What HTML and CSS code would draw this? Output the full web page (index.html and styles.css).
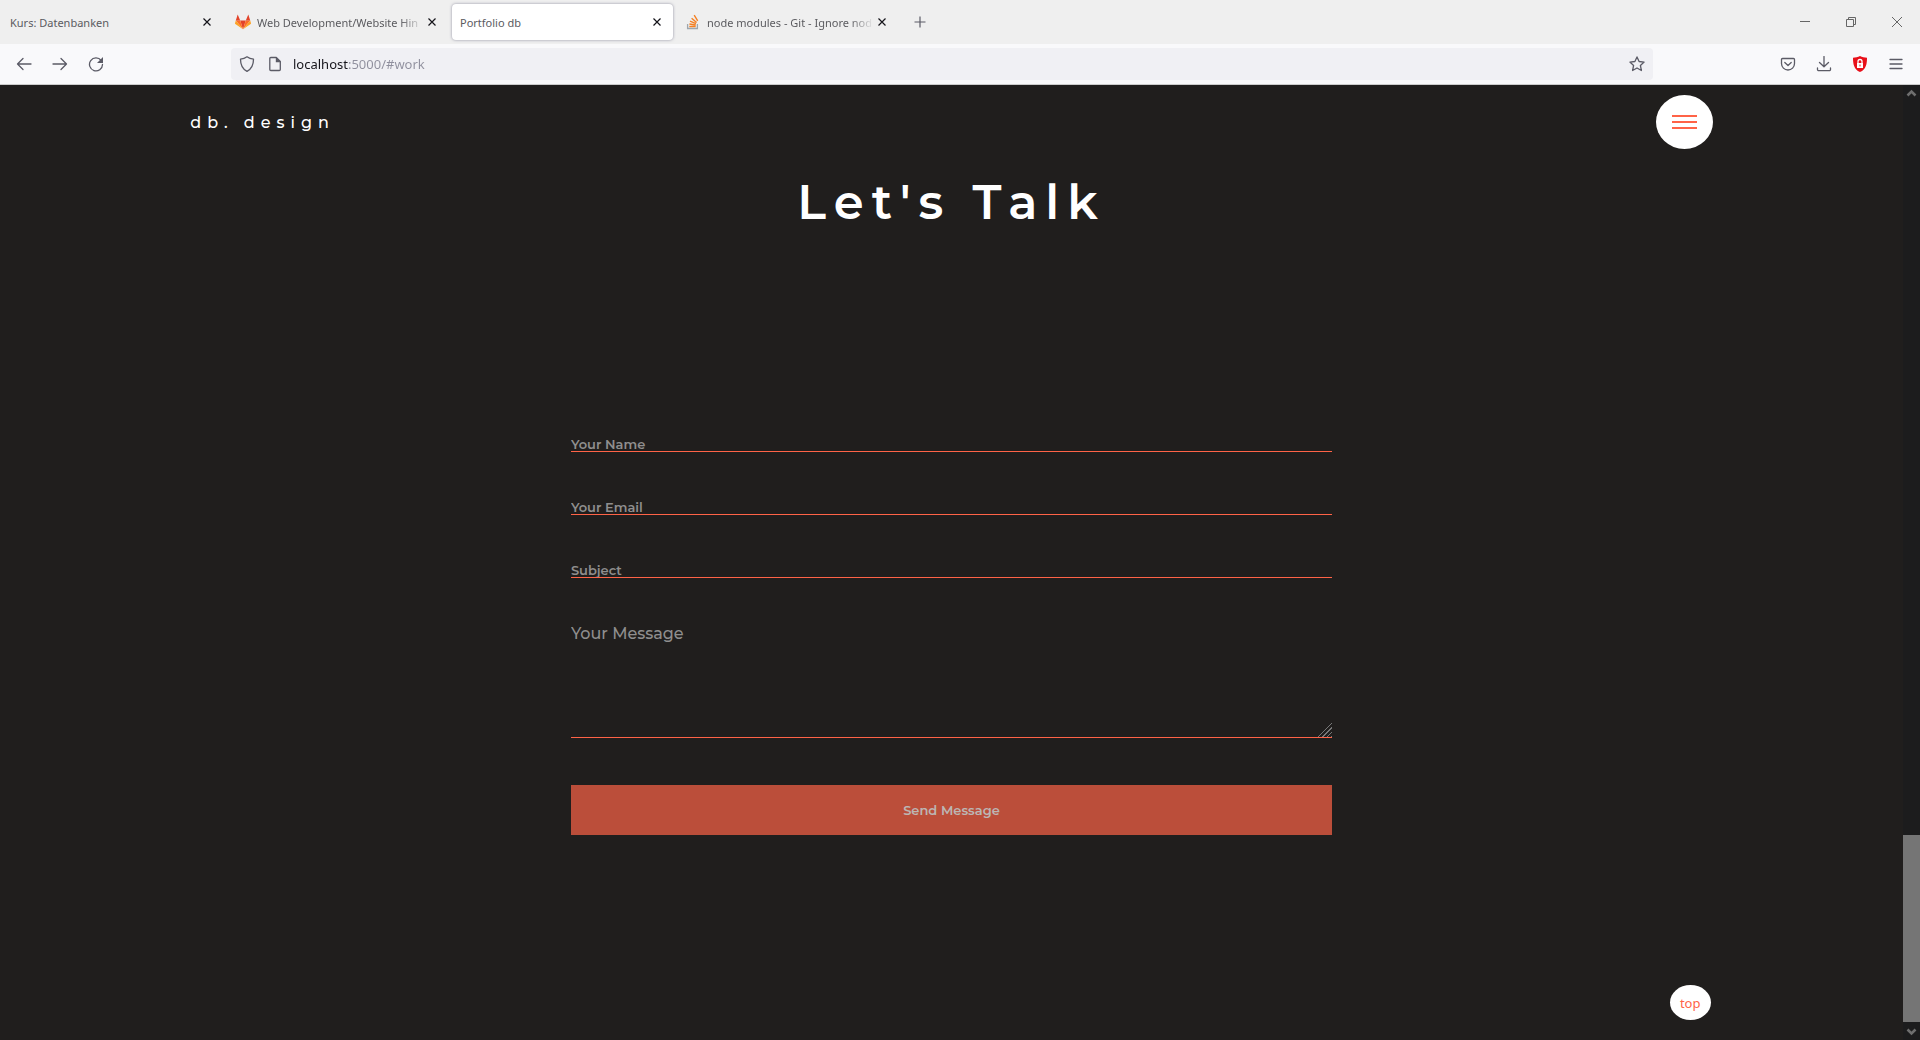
FILE: index.html
```html
<!DOCTYPE html>
<html lang="en">
<head>
<meta charset="utf-8">
<meta name="viewport" content="width=device-width, initial-scale=1">
<title>Portfolio db</title>
<link rel="stylesheet" href="styles.css">
</head>
<body>
<div class="browser">
  <header class="chrome">
    <div class="tabstrip">
      <div class="tab">
        <span class="tab-title">Kurs: Datenbanken</span>
        <button class="tab-close" aria-label="Close tab"><svg width="16" height="16" viewBox="0 0 16 16"><path d="M4.500 4.500l7 7M11.500 4.500l-7 7"/></svg></button>
      </div>
      <div class="tab">
        <svg class="favicon" width="16" height="16" viewBox="0 0 16 16"><path fill="#e24329" d="M8 15.200L5.200 6.500h5.600z"/><path fill="#fc6d26" d="M8 15.200L.8 6.500h4.400zM8 15.200l7.200-8.700h-4.400z"/><path fill="#fca326" d="M.8 6.500L0 9.300c0 .3 0 .6.300.8L8 15.200zM15.200 6.500l.8 2.800c0 .3 0 .6-.3.800L8 15.200z"/><path fill="#e24329" d="M.8 6.500L2.700.6l2.500 5.900zM15.200 6.500L13.300.6l-2.500 5.900z"/></svg>
        <span class="tab-title fade">Web Development/Website Hin</span>
        <button class="tab-close" aria-label="Close tab"><svg width="16" height="16" viewBox="0 0 16 16"><path d="M4.500 4.500l7 7M11.500 4.500l-7 7"/></svg></button>
      </div>
      <div class="tab active">
        <span class="tab-title">Portfolio db</span>
        <button class="tab-close" aria-label="Close tab"><svg width="16" height="16" viewBox="0 0 16 16"><path d="M4.500 4.500l7 7M11.500 4.500l-7 7"/></svg></button>
      </div>
      <div class="tab">
        <svg class="favicon" width="16" height="16" viewBox="0 0 16 16" fill="none"><path stroke="#9fa6ad" stroke-width="1.300" d="M2.600 10v4.500h9.800V10"/><path stroke="#f48024" stroke-width="1.400" d="M4.300 12.500h6.400M4.400 10l6.300 1M5 7.200l6 2.500M6.600 4.200l5 4.300M9.200 1.200l3.500 5.600"/></svg>
        <span class="tab-title fade">node modules - Git - Ignore nod</span>
        <button class="tab-close" aria-label="Close tab"><svg width="16" height="16" viewBox="0 0 16 16"><path d="M4.500 4.500l7 7M11.500 4.500l-7 7"/></svg></button>
      </div>
      <button class="new-tab" aria-label="New tab"><svg width="16" height="16" viewBox="0 0 16 16"><path d="M8 2.500v11M2.500 8h11"/></svg></button>
      <div class="window-controls">
        <button aria-label="Minimize"><svg width="10" height="10" viewBox="0 0 10 10"><path d="M0 4.500h10"/></svg></button>
        <button aria-label="Restore"><svg width="10" height="10" viewBox="0 0 10 10"><path d="M.5 2.500h7v7h-7zM2.500 2.500v-2h7v7h-2"/></svg></button>
        <button aria-label="Close window"><svg width="10" height="10" viewBox="0 0 10 10"><path d="M0 0l10 10M10 0L0 10"/></svg></button>
      </div>
    </div>
    <div class="toolbar">
      <div class="tools">
        <button aria-label="Back"><svg width="16" height="16" viewBox="0 0 16 16"><path d="M15 8H1.500M7 2.500L1.500 8 7 13.500"/></svg></button>
        <button aria-label="Forward"><svg width="16" height="16" viewBox="0 0 16 16"><path d="M1 8h13.500M9 2.500L14.500 8 9 13.500"/></svg></button>
        <button aria-label="Reload"><svg width="16" height="16" viewBox="0 0 16 16"><path d="M13.200 4.500A6.500 6.500 0 1 0 14.500 8.500"/><path class="solid" d="M15 1v6H9z"/></svg></button>
      </div>
      <div class="urlbar">
        <svg width="16" height="16" viewBox="0 0 16 16"><path d="M8 .8c2 1.500 4.300 2.200 6.500 2.400C14.500 8.500 12.500 13 8 15.300 3.500 13 1.500 8.500 1.500 3.200 3.700 3 6 2.300 8 .8z"/></svg>
        <svg width="16" height="16" viewBox="0 0 16 16"><path d="M3.800 1.500h5.500l4 4v8a1 1 0 0 1-1 1H3.800a1 1 0 0 1-1-1v-11a1 1 0 0 1 1-1z"/><path class="solid" d="M8.800 1v5.200H14z"/></svg>
        <input class="url" type="text" aria-label="Address" value="localhost:5000/#work">
        <button class="star" aria-label="Bookmark"><svg width="16" height="16" viewBox="0 0 16 16"><path d="M8 .9l2.100 4.600 5 .6-3.700 3.400 1 5L8 12l-4.400 2.500 1-5L.9 6.100l5-.6z"/></svg></button>
      </div>
      <div class="tools">
        <button aria-label="Pocket"><svg width="16" height="16" viewBox="0 0 16 16"><path d="M2.500 2.500h11a1 1 0 0 1 1 1V7.500a6.500 6.500 0 0 1-13 0v-4a1 1 0 0 1 1-1zM4.800 6.500L8 9.500l3.200-3"/></svg></button>
        <button aria-label="Downloads"><svg width="16" height="16" viewBox="0 0 16 16"><path d="M8 .5v10M3.500 6.500L8 10.800l4.500-4.300M1.500 12v1.500a1.200 1.200 0 0 0 1.200 1.200h10.600a1.200 1.200 0 0 0 1.200-1.200V12"/></svg></button>
        <button aria-label="Extension"><svg width="16" height="16" viewBox="0 0 16 16"><path class="shield" d="M8 0c2 1.200 4.700 1.700 7 1.700 0 6-.8 11.500-7 14.300C1.800 13.200 1 7.700 1 1.700 3.300 1.700 6 1.200 8 0z"/><path class="lock" d="M5 7h6v5H5z"/><path class="shackle" d="M6 7.200V5.500a2 2 0 0 1 4 0v1.700"/><path class="keyhole" d="M8 9v1"/></svg></button>
        <button aria-label="Menu"><svg width="16" height="16" viewBox="0 0 16 16"><path d="M2 3.500h12M2 8h12M2 12.500h12"/></svg></button>
      </div>
    </div>
  </header>
  <div class="viewport">
    <div class="page">
      <nav class="site-nav">
        <a class="logo" href="#home">db. design</a>
        <button class="burger" aria-label="Open menu"><span></span><span></span><span></span></button>
      </nav>
      <main class="contact">
        <h1>Let's Talk</h1>
        <form class="contact-form">
          <input type="text" placeholder="Your Name" aria-label="Your Name">
          <input type="email" placeholder="Your Email" aria-label="Your Email">
          <input type="text" placeholder="Subject" aria-label="Subject">
          <textarea placeholder="Your Message" aria-label="Your Message"></textarea>
          <button type="button">Send Message</button>
        </form>
      </main>
      <button class="to-top">top</button>
    </div>
    <div class="scrollbar">
      <svg width="17" height="17" viewBox="0 0 17 17"><path d="M4.500 10.500l4-4 4 4"/></svg>
      <div class="thumb"></div>
      <svg width="17" height="17" viewBox="0 0 17 17"><path d="M4.500 6.500l4 4 4-4"/></svg>
    </div>
  </div>
</div>
</body>
</html>
```
FILE: styles.css
```css
* { box-sizing: border-box; }
body { margin: 0; font-family: "Noto Sans", sans-serif; }
button { border: 0; padding: 0; background: none; font: inherit; cursor: pointer; }
svg { display: block; flex: none; fill: none; }
.browser { display: flex; flex-direction: column; min-height: 100vh; }

/* Browser frame */
.chrome { background: #f9f9fb; border-bottom: 1px solid #cccccc; }
.tabstrip { display: flex; align-items: center; gap: 4px; height: 44px; padding-left: 2px; background: #efefef; }
.tab { display: flex; align-items: center; width: 221px; height: 36px; padding: 0 8px; border-radius: 4px; font-size: 11px; color: #5b5b5f; }
.tab.active { background: #fff; box-shadow: 0 0 3px rgba(80, 80, 110, .6); }
.favicon { margin-right: 6px; }
.tab-title { flex: 1; overflow: hidden; white-space: nowrap; }
.tab-title.fade { -webkit-mask-image: linear-gradient(to left, transparent, #000 24px); mask-image: linear-gradient(to left, transparent, #000 24px); }
.tab-close svg { stroke: #15141a; stroke-width: 1.2; }
.new-tab { display: grid; place-items: center; width: 32px; height: 32px; margin-left: 2px; }
.new-tab svg { stroke: #5b5b66; stroke-width: 1.2; }
.window-controls { display: flex; margin-left: auto; }
.window-controls button { display: grid; place-items: center; width: 46px; height: 44px; }
.window-controls svg { stroke: #666; stroke-width: 1; }
.toolbar { display: flex; align-items: center; height: 40px; padding: 0 6px; }
.tools { display: flex; }
.tools button { display: grid; place-items: center; width: 36px; height: 32px; }
.toolbar svg { stroke: #5b5b66; stroke-width: 1.3; stroke-linejoin: round; stroke-linecap: round; }
.toolbar .solid { fill: #5b5b66; stroke: none; }
.toolbar .shield { fill: #e8101a; stroke: none; }
.toolbar .lock { fill: #fff; stroke: none; }
.toolbar .shackle { stroke: #fff; }
.toolbar .keyhole { stroke: #e8101a; stroke-width: 1; }
.urlbar { display: flex; align-items: center; gap: 12px; flex: 1; height: 32px; margin: 0 117px; padding: 0 8px; border-radius: 4px; background: #f0f0f4; }
.url { flex: 1; min-width: 0; height: 24px; margin-left: -2px; padding: 0; border: 0; outline: 0; font: 13px "Noto Sans", sans-serif; color: #8f8f9d; background: linear-gradient(to right, #15141a 55px, #8f8f9d 55px); -webkit-background-clip: text; background-clip: text; -webkit-text-fill-color: transparent; }

/* Scrolling area */
.viewport { display: flex; flex: 1; background: #201e1d; }
.page { flex: 1; position: relative; font-family: Montserrat, Inter, sans-serif; font-weight: 500; }
.scrollbar { display: flex; flex-direction: column; width: 17px; background: #1c1c1d; }
.scrollbar svg { stroke: #6e6e6e; stroke-width: 2.5; }
.thumb { height: 187px; margin: auto 0 1px; background: #757575; }

/* Portfolio site */
.site-nav { display: flex; align-items: center; justify-content: space-between; padding: 10px 10% 0; }
.logo { color: #fff; font-size: 16px; letter-spacing: 6px; text-decoration: none; }
.burger { display: flex; flex-direction: column; align-items: center; justify-content: center; gap: 4px; width: 57px; height: 54px; border-radius: 50%; background: #fff; }
.burger span { width: 25px; height: 2px; background: tomato; }
.contact { display: flex; flex-direction: column; align-items: center; padding-top: 23px; }
h1 { margin: 0; color: #fff; font-size: 48px; line-height: 60px; font-weight: 600; letter-spacing: 8px; }
.contact-form { display: flex; flex-direction: column; gap: 47px; width: 40%; margin-top: 204px; }
.contact-form input,
.contact-form textarea { display: block; width: 100%; padding: 0; border: 0; border-bottom: 1px solid tomato; outline: 0; border-radius: 0; background: transparent; color: #fff; font: inherit; }
.contact-form input { height: 16px; font-size: 13px; font-weight: 600; line-height: 15px; }
.contact-form textarea { height: 113px; font-size: 16px; line-height: 18px; resize: vertical; }
.contact-form textarea::-webkit-scrollbar { width: 15px; height: 15px; }
.contact-form textarea::-webkit-resizer { background: linear-gradient(135deg, #201e1d 50%, transparent 50%), repeating-linear-gradient(135deg, #201e1d 0 2px, #777 2px 3px); }
.contact-form ::placeholder { color: #8f8e8e; opacity: 1; }
.contact-form button { height: 50px; background: #bb4e3a; color: #bcb6b4; font-size: 13px; font-weight: 600; }
.to-top { position: absolute; right: calc(10% + 2px); bottom: 20px; width: 41px; height: 35px; border-radius: 50%; background: #fff; color: tomato; font: 13px "Noto Sans", sans-serif; }
```
